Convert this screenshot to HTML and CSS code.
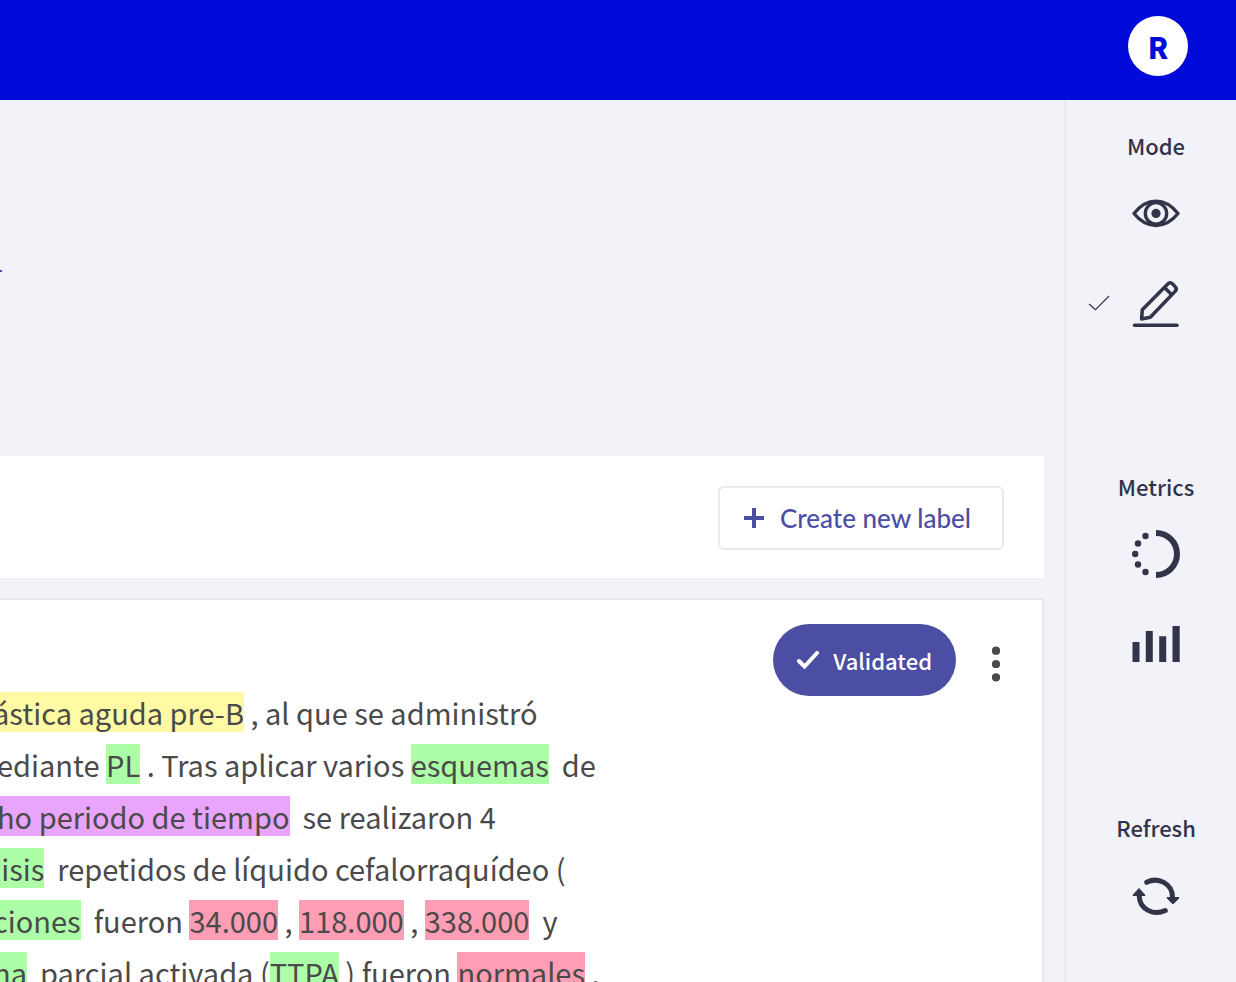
FILE: index.html
```html
<!DOCTYPE html>
<html lang="es">
<head>
<meta charset="utf-8">
<meta name="viewport" content="width=device-width, initial-scale=1">
<title>Annotation</title>
<link rel="stylesheet" href="styles.css">
</head>
<body>
<header class="topbar"><button class="avatar" type="button">R</button></header>
<div class="layout">
  <main class="main">
    <div class="intro"><span class="intro-mark"></span></div>
    <section class="labels">
      <button class="create" type="button">
        <svg width="20" height="20" viewBox="0 0 20 20" aria-hidden="true"><path d="M10 0v20M0 10h20" fill="none" stroke="currentColor" stroke-width="4"/></svg>
        Create new label
      </button>
    </section>
    <article class="record">
      <div class="text">
        <p class="line cut"><mark class="yellow">ástica aguda pre-B</mark> , al que se administró</p>
        <p class="line">ediante <mark class="green">PL</mark> . Tras aplicar varios <mark class="green">esquemas</mark>&nbsp; de</p>
        <p class="line"><mark class="purple">ho periodo de tiempo</mark>&nbsp; se realizaron 4</p>
        <p class="line cut"><mark class="green">lisis</mark>&nbsp; repetidos de líquido cefalorraquídeo (</p>
        <p class="line cut"><mark class="green">ciones</mark>&nbsp; fueron <mark class="pink">34.000</mark> , <mark class="pink">118.000</mark> , <mark class="pink">338.000</mark>&nbsp; y</p>
        <p class="line cut"><mark class="green">na</mark>&nbsp; parcial activada (<mark class="green">TTPA</mark> ) fueron <mark class="pink">normales</mark> .</p>
      </div>
      <div class="actions">
        <button class="validated" type="button">
          <svg width="22" height="18" viewBox="0 0 22 18" aria-hidden="true"><path d="M2 10l5.500 5.500L20 2" fill="none" stroke="currentColor" stroke-width="4" stroke-linecap="round"/></svg>
          Validated
        </button>
        <button class="more" type="button" aria-label="More">
          <svg width="8" height="36" viewBox="0 0 8 36" fill="currentColor" aria-hidden="true"><circle cx="4" cy="4.700" r="4.100"/><circle cx="4" cy="18" r="4.100"/><circle cx="4" cy="31.300" r="4.100"/></svg>
        </button>
      </div>
    </article>
  </main>
  <aside class="sidebar">
    <section class="group">
      <h2 class="title">Mode</h2>
      <div class="row">
        <button class="tool" type="button" aria-label="Explore">
          <svg width="48" height="48" viewBox="0 0 48 48" fill="none" stroke="currentColor" stroke-width="3.300" aria-hidden="true"><path d="M2 24.500C8 17 16 12.200 24 12.200s16 4.800 22 12.300C40 32 32 36.500 24 36.500S8 32 2 24.500z" stroke-linejoin="round"/><circle cx="24" cy="24.400" r="10.700"/><circle cx="24" cy="24.400" r="4.600" fill="currentColor" stroke="none"/></svg>
        </button>
      </div>
      <div class="row">
        <svg class="tick" width="22" height="16" viewBox="0 0 22 16" aria-hidden="true"><path d="M1 9l6.500 5.700L21 1" fill="none" stroke="currentColor" stroke-width="1.200"/></svg>
        <button class="tool" type="button" aria-label="Annotate">
          <svg width="48" height="48" viewBox="0 0 48 48" fill="none" stroke="currentColor" stroke-width="3.500" stroke-linejoin="round" stroke-linecap="round" aria-hidden="true"><path d="M2.500 46.200h42.500"/><path d="M9.600 40l.7-9.300L35.800 4.900q2.400-2.300 4.800 0l2.500 2.700q2.300 2.400 0 4.800L18.300 38.300z"/><path d="M32.500 8.500l7 7" stroke-linecap="butt"/></svg>
        </button>
      </div>
    </section>
    <section class="group">
      <h2 class="title">Metrics</h2>
      <div class="row">
        <button class="tool" type="button" aria-label="Progress">
          <svg width="48" height="48" viewBox="0 0 48 48" aria-hidden="true"><path d="M24 3a21 21 0 0 1 0 42" fill="none" stroke="currentColor" stroke-width="6"/><g fill="currentColor"><circle cx="13.500" cy="6" r="3.200"/><circle cx="6" cy="13.500" r="3.200"/><circle cx="3.200" cy="24" r="3.200"/><circle cx="6" cy="34.500" r="3.200"/><circle cx="13.500" cy="42" r="3.200"/></g></svg>
        </button>
      </div>
      <div class="row">
        <button class="tool" type="button" aria-label="Stats">
          <svg width="48" height="48" viewBox="0 0 48 48" fill="currentColor" aria-hidden="true"><path d="M.5 22h7v20h-7zM13.800 11h7v31h-7zM27.200 16.300h7V42h-7zM40.500 6h7.200v36h-7.200z"/></svg>
        </button>
      </div>
    </section>
    <section class="group">
      <h2 class="title">Refresh</h2>
      <div class="row">
        <button class="tool" type="button" aria-label="Refresh">
          <svg width="48" height="48" viewBox="0 0 48 48" aria-hidden="true"><path d="M14.700 11.300C26 5.500 40.300 12.500 40.500 26M33.300 39.500C22 45 7.500 38.500 7.200 25" fill="none" stroke="currentColor" stroke-width="5" stroke-linecap="round"/><path d="M1 25h12q.8-.8 0-1.500L7 17l-6 6.500q-.8.700 0 1.500zM35 26h12q.8.800 0 1.500L41 33.500l-6-6q-.8-.7 0-1.500z" fill="currentColor"/></svg>
        </button>
      </div>
    </section>
  </aside>
</div>
</body>
</html>
```
FILE: styles.css
```css
* { box-sizing: border-box; }

body {
  margin: 0;
  height: 100vh;
  display: flex;
  flex-direction: column;
  overflow: hidden;
  background: #f1f3f8;
  color: #4a4a4a;
  font-family: "Noto Sans CJK SC", "Noto Sans", sans-serif;
}

button {
  padding: 0;
  border: 0;
  background: none;
  color: inherit;
  font: inherit;
}

svg { display: block; flex: none; }

.topbar {
  flex: none;
  display: flex;
  justify-content: flex-end;
  align-items: flex-start;
  height: 100px;
  padding: 16px 48px;
  background: #000bd9;
}

.avatar {
  width: 60px;
  height: 60px;
  border-radius: 50%;
  background: #fff;
  color: #000bd9;
  font-size: 29px;
  font-weight: 900;
}

.layout {
  flex: 1;
  min-height: 0;
  display: flex;
}

.main {
  flex: 1;
  min-width: 0;
  display: flex;
  flex-direction: column;
  padding-right: 20px;
}

.intro {
  flex: none;
  height: 356px;
  padding-top: 170px;
}

.intro-mark {
  display: block;
  width: 2px;
  height: 2px;
  background: #4c4ea3;
}

.labels {
  flex: none;
  display: flex;
  justify-content: flex-end;
  margin-bottom: 20px;
  padding: 30px 40px 28px;
  border-radius: 0 2px 2px 0;
  background: #fff;
}

.create {
  display: flex;
  align-items: center;
  gap: 16px;
  height: 64px;
  padding: 0 31px 0 24px;
  border: 2px solid #e9eaf0;
  border-radius: 6px;
  color: #4c4ea3;
  font-family: Lato, sans-serif;
  font-size: 26px;
  font-weight: 500;
}

.record {
  flex: 1;
  min-height: 0;
  display: flex;
  border: solid #e6e8ef;
  border-width: 2px 2px 0 0;
  background: #fff;
}

.text {
  flex: 1;
  min-width: 0;
  margin-left: -3px;
  padding-top: 86px;
}

.line {
  margin: 0;
  font-size: 29px;
  line-height: 52px;
  white-space: nowrap;
}

.cut { margin-left: -4px; }

mark {
  display: inline-block;
  color: inherit;
  line-height: 40px;
}
.yellow { background: #fffaa3; }
.green { background: #acffa6; }
.purple { background: #e9a4fb; }
.pink { background: #ff9db4; }

.actions {
  display: flex;
  align-items: flex-start;
  gap: 36px;
  padding: 24px 42px 0 0;
}

.validated {
  display: flex;
  align-items: center;
  gap: 14px;
  height: 72px;
  padding: 0 24px;
  border-radius: 36px;
  background: #4c4ea3;
  color: #fff;
  font-size: 22px;
  font-weight: 500;
}

.more { padding-top: 22px; }

.sidebar {
  flex: none;
  width: 172px;
  padding: 30px 0 0 10px;
  border-left: 2px solid #e9eaf0;
  color: #33334a;
}

.group {
  display: grid;
  row-gap: 42px;
  margin-bottom: 144px;
}

.title {
  margin: 0 0 -13px;
  font-size: 22px;
  font-weight: 500;
  line-height: 30px;
  text-align: center;
}

.row {
  display: grid;
  grid-template-columns: 1fr 48px 1fr;
  align-items: center;
}

.tool { grid-column: 2; }

.tick {
  justify-self: end;
  margin-right: 22px;
}
```
